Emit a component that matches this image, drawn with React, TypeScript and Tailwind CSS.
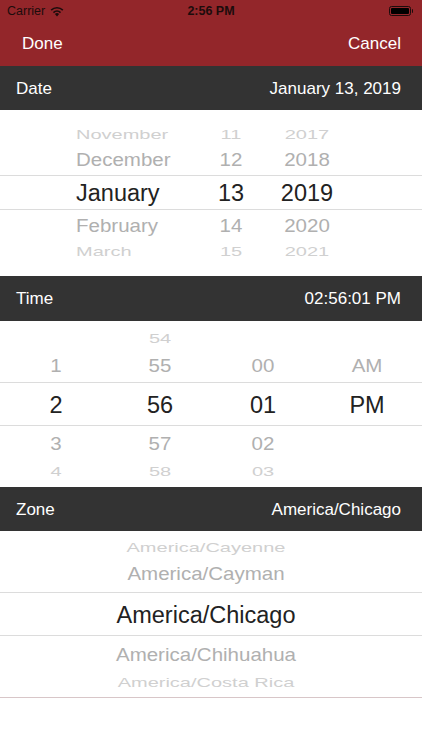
import React from 'react'

const font = { fontFamily: '"Liberation Sans", Arial, sans-serif' }

type Row = { h: number; items: string[]; kind: 'far' | 'near' | 'sel' | 'pad' }

function Cell({ text, kind }: { text: string; kind: Row['kind'] }) {
    if (kind === 'sel') return <span className="text-[23.5px] text-[#222222] leading-none">{text}</span>
    if (kind === 'near') return <span className="inline-block text-[20.5px] text-[#b0b0b0] leading-none scale-y-[0.9]">{text}</span>
    return <span className="inline-block text-[20px] text-[#d0d0d0] leading-none scale-y-[0.68]">{text}</span>
}

function Picker({ rows, cols }: { rows: Row[]; cols: { w: string; align: string }[] }) {
    return (
        <div className="h-[166px] flex flex-col bg-white overflow-hidden">
            {rows.map((r, i) => (
                <div
                    key={i}
                    style={{ height: r.h }}
                    className={`flex items-center shrink-0 pt-[5px] ${r.kind === 'sel' ? 'border-y border-[#dcdcdc]' : ''}`}
                >
                    {cols.map((c, j) => (
                        <div key={j} className={`${c.w} ${c.align} shrink-0`}>
                            {r.items[j] ? <Cell text={r.items[j]} kind={r.kind} /> : null}
                        </div>
                    ))}
                </div>
            ))}
        </div>
    )
}

function Bar({ label, value, h }: { label: string; value: string; h: string }) {
    return (
        <div className={`${h} bg-[#333333] flex items-center justify-between pl-4 pr-[21px] text-white text-[17px] pt-[1px]`}>
            <span>{label}</span>
            <span>{value}</span>
        </div>
    )
}

export default function App() {
    const dateCols = [
        { w: 'w-[76px]', align: '' },
        { w: 'w-[125px]', align: 'text-left' },
        { w: 'w-[60px]', align: 'text-center' },
        { w: 'w-[92px]', align: 'text-center' },
    ]
    const dateRows: Row[] = [
        { h: 12, items: [], kind: 'pad' },
        { h: 22, items: ['', 'November', '11', '2017'], kind: 'far' },
        { h: 31, items: ['', 'December', '12', '2018'], kind: 'near' },
        { h: 35, items: ['', 'January', '13', '2019'], kind: 'sel' },
        { h: 30, items: ['', 'February', '14', '2020'], kind: 'near' },
        { h: 21, items: ['', 'March', '15', '2021'], kind: 'far' },
    ]

    const timeCols = [
        { w: 'w-[112px]', align: 'text-center' },
        { w: 'w-[96px]', align: 'text-center' },
        { w: 'w-[110px]', align: 'text-center' },
        { w: 'w-[98px]', align: 'text-center' },
    ]
    const timeRows: Row[] = [
        { h: 4, items: [], kind: 'pad' },
        { h: 22, items: ['', '54', '', ''], kind: 'far' },
        { h: 34, items: ['1', '55', '00', 'AM'], kind: 'near' },
        { h: 44, items: ['2', '56', '01', 'PM'], kind: 'sel' },
        { h: 35, items: ['3', '57', '02', ''], kind: 'near' },
        { h: 18, items: ['4', '58', '03', ''], kind: 'far' },
    ]

    const zoneCols = [{ w: 'w-full pr-[10px]', align: 'text-center' }]
    const zoneRows: Row[] = [
        { h: 6, items: [], kind: 'pad' },
        { h: 18, items: ['America/Cayenne'], kind: 'far' },
        { h: 37, items: ['America/Cayman'], kind: 'near' },
        { h: 44, items: ['America/Chicago'], kind: 'sel' },
        { h: 36, items: ['America/Chihuahua'], kind: 'near' },
        { h: 18, items: ['America/Costa Rica'], kind: 'far' },
    ]

    return (
        <div className="w-[422px] h-[750px] bg-white overflow-hidden" style={font}>
            {/* Status bar + nav */}
            <div className="bg-[#93262a]">
                <div className="h-[21px] flex items-center justify-between px-[7px] pt-[1px] text-[12.5px] text-[#1c0c0c]">
                    <div className="flex items-center gap-[5px] w-[120px]">
                        <span>Carrier</span>
                        <svg width="14" height="11" viewBox="0 0 14 11">
                            <path d="M7 10.5 L4.9 8.1 A3 3 0 0 1 9.1 8.1 Z" fill="#1c0c0c" />
                            <path d="M2.9 6 A5.8 5.8 0 0 1 11.1 6 L10 7.2 A4.3 4.3 0 0 0 4 7.2 Z" fill="#1c0c0c" />
                            <path d="M0.6 3.6 A9 9 0 0 1 13.4 3.6 L12.3 4.8 A7.4 7.4 0 0 0 1.7 4.8 Z" fill="#1c0c0c" />
                        </svg>
                    </div>
                    <span className="font-bold">2:56 PM</span>
                    <div className="w-[120px] flex justify-end items-center pr-[2px]">
                        <div className="w-[22px] h-[10px] rounded-[2.5px] border border-[#1c0c0c] p-[1px]">
                            <div className="w-full h-full bg-black rounded-[1px]" />
                        </div>
                        <div className="w-[1.5px] h-[4px] bg-[#1c0c0c] ml-[1px] rounded-r-sm" />
                    </div>
                </div>
                <div className="h-[45px] flex items-center justify-between px-[22px] pr-[21px] text-white text-[17px] pt-[1px]">
                    <span>Done</span>
                    <span>Cancel</span>
                </div>
            </div>

            <Bar label="Date" value="January 13, 2019" h="h-[44px]" />
            <Picker rows={dateRows} cols={dateCols} />

            <Bar label="Time" value="02:56:01 PM" h="h-[45px]" />
            <Picker rows={timeRows} cols={timeCols} />

            <Bar label="Zone" value="America/Chicago" h="h-[44px]" />
            <Picker rows={zoneRows} cols={zoneCols} />
            <div className="h-px bg-[#d8c6c8]" />
        </div>
    )
}
